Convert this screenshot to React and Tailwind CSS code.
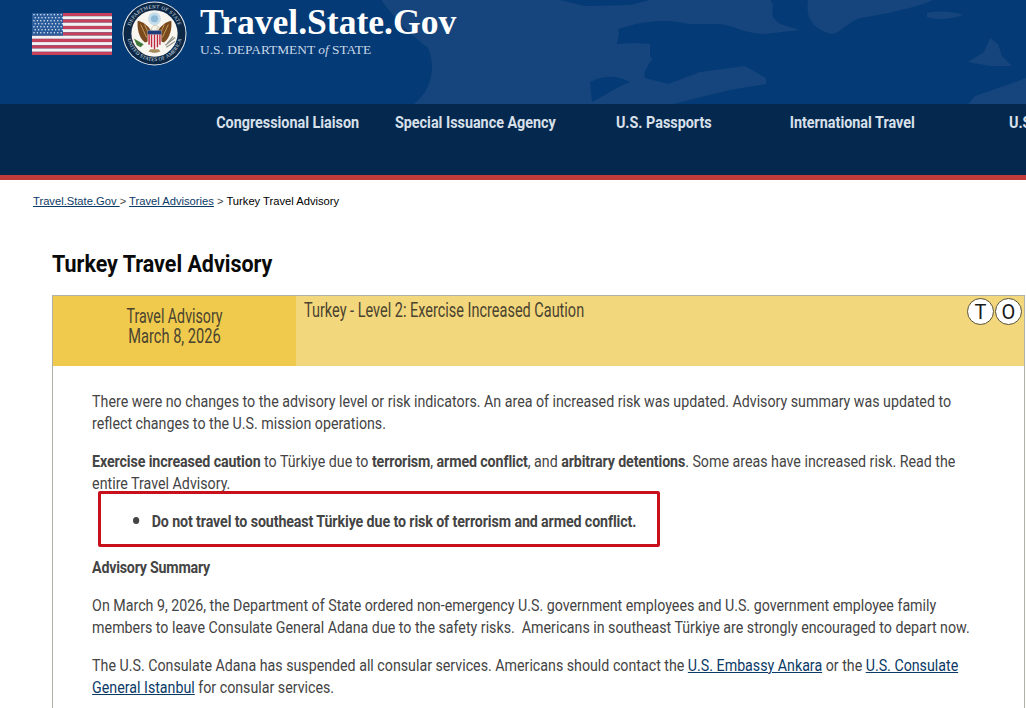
import React from "react";

const navItems = [
  { label: "Congressional Liaison", margin: "ml-[241px]" },
  { label: "Special Issuance Agency", margin: "ml-[40px]" },
  { label: "U.S. Passports", margin: "ml-[67px]" },
  { label: "International Travel", margin: "ml-[87px]" },
  { label: "U.S. Embassies", margin: "ml-[105px]" },
];

const Flag = () => {
  const stripes = Array.from({ length: 13 }, (_, i) => i);
  const stars = [];
  for (let row = 0; row < 7; row++) {
    for (let col = 0; col < 9; col++) {
      stars.push(<circle key={`${row}-${col}`} cx={2 + col * 3.4 + (row % 2) * 1.2} cy={1.8 + row * 3} r="0.75" fill="#e6edf5" />);
    }
  }
  return (
    <svg width="80" height="42" viewBox="0 0 80 42" className="shrink-0">
      {stripes.map((i) => (
        <rect key={i} x="0" y={(i * 42) / 13} width="80" height={42 / 13} fill={i % 2 === 0 ? "#c5405a" : "#f4f1f2"} />
      ))}
      <rect x="0" y="0" width="31" height="22.6" fill="#2a5c9c" />
      {stars}
    </svg>
  );
};

const Seal = () => (
  <svg width="65" height="65" viewBox="0 0 66 66" className="shrink-0">
    <defs>
      <path id="sealTop" d="M 7.5 33 A 25.5 25.5 0 0 1 58.5 33" />
      <path id="sealBottom" d="M 5 33 A 28 28 0 0 0 61 33" />
    </defs>
    <circle cx="33" cy="33" r="32.5" fill="#e8edf2" />
    <circle cx="33" cy="33" r="31.5" fill="#0d2746" />
    <circle cx="33" cy="33" r="23.5" fill="#f7f6f0" />
    <text fontFamily="Liberation Serif, serif" fontSize="5.2" fill="#dfe6ee" letterSpacing="0.3">
      <textPath href="#sealTop" startOffset="50%" textAnchor="middle">DEPARTMENT OF STATE</textPath>
    </text>
    <text fontFamily="Liberation Serif, serif" fontSize="5.2" fill="#dfe6ee" letterSpacing="0.2">
      <textPath href="#sealBottom" startOffset="50%" textAnchor="middle">UNITED STATES OF AMERICA</textPath>
    </text>
    {/* crest */}
    <circle cx="33" cy="18" r="6.5" fill="#c5dcea" />
    <circle cx="33" cy="18" r="3.6" fill="#8db8d6" />
    {/* wings */}
    <path d="M30 31 C26 24 21 21 16 20 C15 27 17 37 23 42 C26 42 29 39 30 36 Z" fill="#7a4a1f" />
    <path d="M36 31 C40 24 45 21 50 20 C51 27 49 37 43 42 C40 42 37 39 36 36 Z" fill="#7a4a1f" />
    <path d="M19 24 L25 37 M23 24 L28 35 M47 24 L41 37 M43 24 L38 35" stroke="#c29a5a" strokeWidth="1" />
    {/* head */}
    <path d="M30 31 C29 27 32 24 35 25 L38 27 L35.5 28 C36 30 36 31 36 32 Z" fill="#f4f1e6" stroke="#a58b5c" strokeWidth="0.4" />
    {/* shield */}
    <path d="M26 30 H40 V40 C40 45 36 47 33 49 C30 47 26 45 26 40 Z" fill="#f4f1f2" />
    <path d="M26 30 H40 V34 H26 Z" fill="#1f3c78" />
    <path d="M27.5 34 V44.5 M30 34 V47 M33 34 V49 M36 34 V47 M38.5 34 V44.5" stroke="#c0283c" strokeWidth="1.4" />
    {/* olive branch and arrows */}
    <path d="M12 38 L22 44 L19 47 L15 45 Z" fill="#3f7a3a" />
    <path d="M44 45 L54 37 M45 47 L54 41 M46 43 L52 36" stroke="#8f8f86" strokeWidth="1.2" />
    <path d="M27 51 C30 53 36 53 39 51 L37 49 H29 Z" fill="#a58b5c" />
  </svg>
);

// faint world map behind the header
const HeaderMap = () => (
  <svg className="absolute inset-0 pointer-events-none" width="1026" height="104" viewBox="0 0 1026 104">
    <path d="M381 0 L770 0 C778 8 765 14 780 24 L800 30 L765 34 C745 34 735 26 720 24 L690 24 C680 30 640 30 620 28 L617 44 L650 42 C672 46 640 66 645 78 L668 84 L700 72 L745 66 L766 78 L766 84 L730 90 L673 104 L414 104 C432 90 436 66 428 48 C412 36 396 20 381 0 Z" fill="#15457c" />
    <path d="M618 30 C650 16 690 20 700 30 C680 36 690 44 662 50 L656 64 L650 56 L650 44 L622 42 Z" fill="#043a75" />
    <path d="M590 82 C606 74 618 76 630 82 C615 88 604 96 592 102 Z" fill="#043a75" />
    <path d="M713 58 L722 56 L725 62 L715 64 Z" fill="#043a75" />
    <path d="M808 0 H933 C915 8 885 14 860 18 C845 24 842 32 832 34 C815 30 805 20 808 0 Z" fill="#15457c" />
    <path d="M927 13 C940 10 955 12 963 15 C950 20 935 20 927 17 Z" fill="#15457c" />
    <path d="M968 62 L984 52 L990 38 L998 44 L1002 56 L1012 66 L990 66 Z" fill="#15457c" />
    <path d="M968 104 L975 96 L1010 84 L1026 78 V104 Z" fill="#15457c" />
    <path d="M560 0 H650 L630 5 L585 6 Z" fill="#043a75" />
  </svg>
);

const Circle = ({ children }) => (
  <span className="flex h-[27px] w-[27px] items-center justify-center rounded-full border border-[#5a5030] bg-white text-[20px] leading-none text-[#1a1a1a]">
    {children}
  </span>
);

const App = () => {
  return (
    <div className="relative h-[708px] w-[1026px] overflow-hidden bg-white font-['Roboto',sans-serif]">
      {/* Header */}
      <header className="relative h-[104px] bg-[#043a75]">
        <HeaderMap />
        <div className="relative flex items-start pl-[32px]">
          <div className="mt-[13px]"><Flag /></div>
          <div className="ml-[10px] mt-[1px]"><Seal /></div>
          <div className="ml-[13px] mt-[2px]">
            <div className="text-[35.6px] font-bold leading-[40px] text-white font-['Liberation_Serif',serif]">Travel.State.Gov</div>
            <div className="text-[13.4px] leading-[15px] text-[#c9d8e8] font-['Liberation_Serif',serif]">
              U.S. DEPARTMENT <i>of</i> STATE
            </div>
          </div>
        </div>
      </header>

      {/* Nav */}
      <nav className="h-[76px] overflow-hidden border-b-[5px] border-[#c23b3b] bg-[#05284f]">
        <ul className="flex origin-left scale-x-[0.897] whitespace-nowrap pt-[9px]">
          {navItems.map((item) => (
            <li key={item.label} className={`${item.margin} shrink-0 text-[16px] font-bold leading-[20px] text-[#d8e0ea]`}>
              {item.label}
            </li>
          ))}
        </ul>
      </nav>

      {/* Breadcrumb */}
      <div className="pl-[33px] pt-[14px] text-[11.2px] leading-[14px] text-[#222] font-['Liberation_Sans',sans-serif]">
        <a className="text-[#0b3a66] underline">Travel.State.Gov </a>
        <span className="text-[#444]">&gt; </span>
        <a className="text-[#0b3a66] underline">Travel Advisories</a>
        <span className="text-[#444]"> &gt; </span>
        <span className="text-black">Turkey Travel Advisory</span>
      </div>

      <div className="pl-[52px]">
        <h1 className="mt-[41px] origin-left scale-x-[0.894] text-[24px] font-bold leading-[30px] text-[#0a0a0a]">Turkey Travel Advisory</h1>

        {/* Advisory box */}
        <section className="mt-[16px] w-[973px] border border-[#b3b0a6]">
          <div className="flex h-[70px]">
            <div className="w-[243px] bg-[#f0ca4d] pt-[10px] text-center text-[20px] leading-[20px] text-[#4a4330]">
              <div className="scale-x-[0.71]">Travel Advisory</div>
              <div className="scale-x-[0.73]">March 8, 2026</div>
            </div>
            <div className="flex flex-1 items-start justify-between bg-[#f3d77c] pl-[8px] pr-[2px]">
              <div className="origin-left scale-x-[0.724] whitespace-nowrap pt-[4px] text-[20px] leading-[21px] text-[#4a4330]">Turkey - Level 2: Exercise Increased Caution</div>
              <div className="mt-[2px] flex gap-[1px]">
                <Circle>T</Circle>
                <Circle>O</Circle>
              </div>
            </div>
          </div>

          <div className="w-[1035px] origin-left scale-x-[0.889] pb-[40px] pl-[44px] pt-[25px] text-[16px] leading-[22px] text-[#444]">
            <p>There were no changes to the advisory level or risk indicators. An area of increased risk was updated. Advisory summary was updated to reflect changes to the U.S. mission operations.</p>
            <p className="mt-[16px]">
              <b className="tracking-[-0.12px]">Exercise increased caution</b> to Türkiye due to <b className="tracking-[-0.12px]">terrorism</b>, <b className="tracking-[-0.12px]">armed conflict</b>, and <b className="tracking-[-0.12px]">arbitrary detentions</b>. Some areas have increased risk. Read the entire Travel Advisory.
            </p>
            <ul className="mt-[13px] list-disc pl-[67px] font-bold tracking-[-0.115px] marker:text-[24px]">
              <li>Do not travel to southeast Türkiye due to risk of terrorism and armed conflict.</li>
            </ul>
            <p className="mt-[24px] font-bold tracking-[-0.25px]">Advisory Summary</p>
            <p className="mt-[16px]">On March 9, 2026, the Department of State ordered non-emergency U.S. government employees and U.S. government employee family members to leave Consulate General Adana due to the safety risks.&nbsp; Americans in southeast Türkiye are strongly encouraged to depart now.</p>
            <p className="mt-[16px]">
              The U.S. Consulate Adana has suspended all consular services. Americans should contact the <a className="text-[#0b3a66] underline">U.S. Embassy Ankara</a> or the <a className="text-[#0b3a66] underline">U.S. Consulate General Istanbul</a> for consular services.
            </p>
          </div>
        </section>
      </div>

      {/* Red highlight drawn over the screenshot */}
      <div className="absolute left-[98px] top-[491px] h-[56px] w-[562px] rounded-[2px] border-[3px] border-[#c8101c]" />
    </div>
  );
};

export default App;
